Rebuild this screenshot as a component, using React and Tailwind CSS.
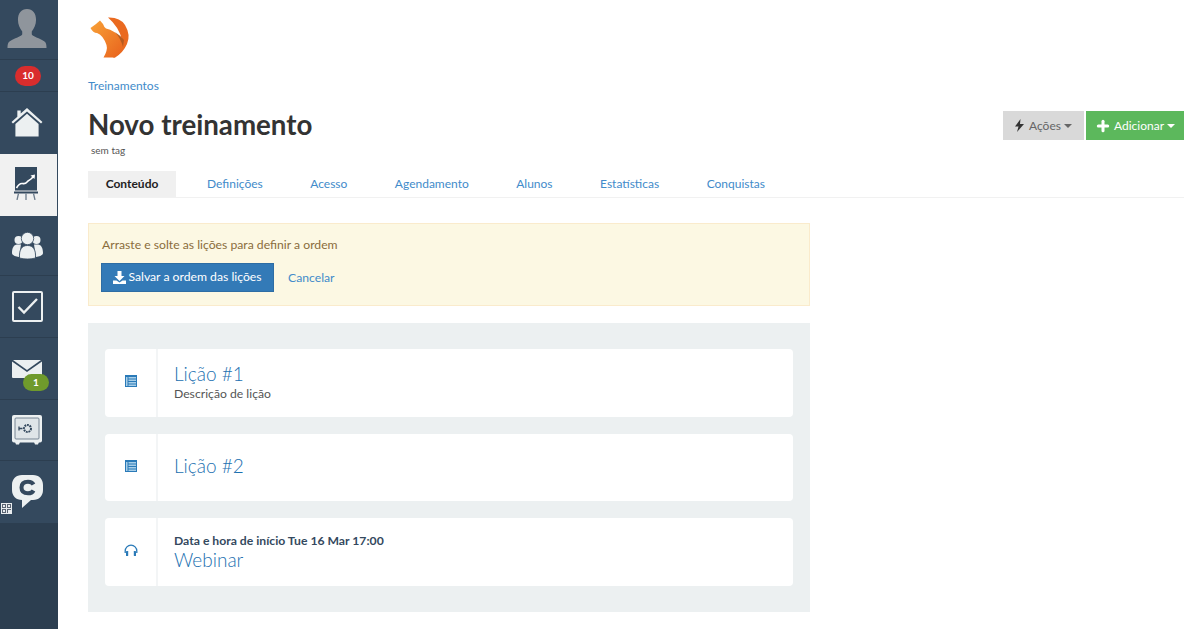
import { Plus } from "lucide-react";

const font = { fontFamily: "Lato, sans-serif" };

const Divider = "border-b border-[#2c3e50]";

const Avatar = () => (
  <svg width="40" height="39" viewBox="0 0 42 40" preserveAspectRatio="none" fill="#8f959c">
    <path d="M21 0c6 0 9.500 4.500 9.500 11 0 5-2 9-4.500 12v3c0 2 9 4.500 13 7 2 1.300 2.500 3.500 2.500 7H.5c0-3.500.5-5.700 2.500-7 4-2.500 13-5 13-7v-3c-2.500-3-4.500-7-4.500-12C11.500 4.500 15 0 21 0z" />
  </svg>
);

const HomeIcon = () => (
  <svg width="32" height="29" viewBox="0 0 32 30" fill="#ecf0f1">
    <path d="M16 0 32 14.500 30.500 16 16 3.500 1.500 16 0 14.500 6 9V2.500h3.500v3.200z" />
    <path d="M16 6 28 16.500V29.500H4V16.500z" />
  </svg>
);

const ChartIcon = () => (
  <svg width="24" height="33" viewBox="0 0 24 33">
    <rect x="1" y="0" width="22" height="23.500" fill="#34495e" />
    <path d="M2.500 21c2-3.500 3.500-5 6-4.500 2 .5 3 .5 4.500-1.500 1-1.500 3-2 4.500-3.500L20 9" fill="none" stroke="#fff" strokeWidth="1.600" />
    <path d="M16.500 8.500 21 7.500 20.500 12z" fill="#fff" />
    <rect x="0" y="24.500" width="24" height="2" fill="#34495e" />
    <path d="M4.500 26.500 3 33M12 26.500V33M19.500 26.500 21 33" stroke="#6d7c8c" strokeWidth="1.300" />
  </svg>
);

const UsersIcon = () => (
  <svg width="31" height="27" viewBox="0 0 31 27" fill="#ecf0f1">
    <circle cx="6.500" cy="8" r="4" />
    <circle cx="24.500" cy="8" r="4" />
    <path d="M0 21c0-5 2-8.500 5-8.500h4L7 25c-4-.5-7-2-7-4zM31 21c0-5-2-8.500-5-8.500h-4L24 25c4-.5 7-2 7-4z" />
    <circle cx="15.500" cy="6.500" r="6.200" stroke="#34495e" strokeWidth=".8" />
    <path d="M7.500 26c-.5-8 2-12.500 8-12.500S24 18 23.500 26c-4 1.300-12 1.300-16 0z" stroke="#34495e" strokeWidth=".8" />
  </svg>
);

const CheckIcon = () => (
  <svg width="31" height="31" viewBox="0 0 31 31" fill="none">
    <rect x="1" y="1" width="29" height="29" stroke="#ecf0f1" strokeWidth="2" rx="1" />
    <path d="M6.500 16 12 21.500 25 8" stroke="#ecf0f1" strokeWidth="2.400" />
  </svg>
);

const MailIcon = () => (
  <svg width="30" height="18" viewBox="0 0 30 18" fill="#ecf0f1">
    <path d="M1 0h28L15 10z" />
    <path d="M0 1.500 15 12 30 1.500V17a1 1 0 0 1-1 1H1a1 1 0 0 1-1-1z" />
  </svg>
);

const SafeIcon = () => (
  <svg width="30" height="30" viewBox="0 0 30 30" fill="none">
    <rect x="0" y="0" width="30" height="27.500" rx="2" fill="#ecf0f1" />
    <rect x="3" y="3" width="24" height="21" rx="1" fill="#dfe5e8" stroke="#5b6d7f" strokeWidth=".8" />
    <circle cx="15.500" cy="13.500" r="3.500" stroke="#34495e" strokeWidth="2" strokeDasharray="1.800 .8" />
    <path d="M7 13.500h3.500M7 11.500v4" stroke="#34495e" strokeWidth="1.300" />
    <path d="M3 27h5l-1 2.500H4zM22 27h5l-1 2.500h-3z" fill="#ecf0f1" />
  </svg>
);

const ChatIcon = () => (
  <svg width="31" height="34" viewBox="0 0 31 34">
    <path d="M10 0h11c6 0 10 4 10 10v5c0 6-4 10-10 10h-2l-9 8 0-8c-6 0-10-4-10-10v-5C0 4 4 0 10 0z" fill="#ecf0f1" />
    <path d="M21.500 9.500c-1-2-3-2.800-5.500-2.800-4 0-6.500 2-6.500 5.800s2.500 5.800 6.500 5.800c2.500 0 4.500-.8 5.500-2.800" fill="none" stroke="#34495e" strokeWidth="4" />
  </svg>
);

const QrIcon = () => (
  <svg width="11" height="11" viewBox="0 0 11 11" className="absolute left-[1px] top-[42px]">
    <rect width="11" height="11" fill="#e9ecef" />
    <path d="M1 1h4v4H1zM6 1h4v4H6zM1 6h4v4H1z" fill="#5a6472" />
    <path d="M2 2h2v2H2zM7 2h2v2H7zM2 7h2v2H2z" fill="#e9ecef" />
    <path d="M6 6h4v1H7v3H6z" fill="#5a6472" />
  </svg>
);

const LessonIcon = () => (
  <svg width="12" height="12" viewBox="0 0 12 12">
    <rect width="12" height="12" fill="#2a7ab8" />
    <path d="M1 2h1.500v9H1zM3.500 2h7.500v1.500H3.500zM3.500 4.500H11V6H3.500zM3.500 7H11v1.500H3.500zM3.500 9.500H11V11H3.500z" fill="#a9cfe8" />
  </svg>
);

const HeadphonesIcon = () => (
  <svg width="14" height="13" viewBox="0 0 14 13" fill="none">
    <path d="M1.200 9V7a5.800 5.800 0 0 1 11.600 0v2" stroke="#2a7ab8" strokeWidth="1.300" />
    <rect x="2" y="7" width="2.200" height="5" rx=".6" fill="#2a7ab8" />
    <rect x="9.800" y="7" width="2.200" height="5" rx=".6" fill="#2a7ab8" />
  </svg>
);

const DownloadIcon = () => (
  <svg width="13" height="13" viewBox="0 0 13 13" fill="#fff">
    <path d="M4.500 0h4v5h3L6.500 10 1.500 5h3z" />
    <path d="M0 9.500h3.500L6.500 11.500 9.500 9.500H13V13H0z" />
  </svg>
);

const Logo = () => (
  <svg width="44" height="45" viewBox="88 15 44 45">
    <defs>
      <linearGradient id="fox" x1="0" y1="0" x2="1" y2="1">
        <stop offset="0" stopColor="#f8a238" />
        <stop offset="1" stopColor="#e8611c" />
      </linearGradient>
    </defs>
    <path d="M108 17.500Q120 17 125 25 131 35 127 44 123 53 115 57.500H113Q120 47 122 40 119 27 108 17.500z" fill="#ea6a20" />
    <path d="M90.500 28 96 24Q98 22 100 20.500L103 24Q104 27 106 28.500 114 30 124 40 124 50 115 57.500H103.500Q108 50 106.500 45 103 35 97 33 93 33 90.500 28z" fill="url(#fox)" />
    <path d="M115 32Q121 36 124 40L123 47Q121 39 115 32z" fill="#a8551f" opacity=".8" />
  </svg>
);

const Chevron = () => (
  <span className="ml-[3px] inline-block border-x-[4px] border-t-[4px] border-x-transparent border-t-current align-middle" />
);

const tabs = ["Definições", "Acesso", "Agendamento", "Alunos", "Estatísticas", "Conquistas"];

const Lesson = ({ icon, children, className = "" }) => (
  <div className="flex h-[67.5px] rounded-[4px] bg-white">
    <div className="flex w-[53px] shrink-0 items-center justify-center border-r-2 border-[#f3f5f6] pb-[3px]">{icon}</div>
    <div className={`flex flex-col justify-center pl-[16px] ${className}`}>{children}</div>
  </div>
);

const App = () => {
  return (
    <div className="flex h-[629px] overflow-hidden bg-white text-[12.2px]" style={font}>
      {/* Sidebar */}
      <div className="flex w-[58px] shrink-0 flex-col bg-[#2c3e50]">
        <div className={`flex h-[60px] items-end justify-center bg-[#34495e] pb-[11px] pr-[4px] ${Divider}`}><Avatar /></div>
        <div className={`flex h-[32px] items-center justify-center bg-[#34495e] pr-[2px] ${Divider}`}>
          <span className="flex h-[20px] w-[26px] items-center justify-center rounded-full bg-[#d92d2d] text-[10px] font-bold text-white">10</span>
        </div>
        <div className="flex h-[62px] items-center justify-center bg-[#34495e] pb-[2px] pr-[4px]"><HomeIcon /></div>
        <div className="flex h-[62px] items-center justify-center border-r border-[#34495e] bg-[#f1f1f1] pb-[3px] pr-[5px]"><ChartIcon /></div>
        <div className={`flex h-[60px] items-center justify-center bg-[#34495e] pr-[3px] ${Divider}`}><UsersIcon /></div>
        <div className={`flex h-[62px] items-center justify-center bg-[#34495e] pr-[3px] ${Divider}`}><CheckIcon /></div>
        <div className={`relative flex h-[62px] items-center justify-center bg-[#34495e] pr-[4px] ${Divider}`}>
          <MailIcon />
          <span className="absolute left-[23px] top-[36px] flex h-[17px] w-[26px] items-center justify-center rounded-full bg-[#6f9a2c] text-[10px] font-bold text-white">1</span>
        </div>
        <div className={`flex h-[61px] items-center justify-center bg-[#34495e] pr-[4px] ${Divider}`}><SafeIcon /></div>
        <div className="relative flex h-[62px] items-center justify-center bg-[#34495e] pr-[3px]">
          <ChatIcon />
          <QrIcon />
        </div>
      </div>

      {/* Main */}
      <div className="min-w-0 flex-1 pl-[30px] pr-[15px]">
        <div className="flex h-[78px] items-start pt-[15px]"><Logo /></div>
        <a className="block text-[12px] leading-[15px] text-[#428bca]">Treinamentos</a>

        <div className="mt-[14px] flex items-start justify-between">
          <div>
            <h1 className="text-[27.7px] font-bold leading-[36px] text-[#333]">Novo treinamento</h1>
            <p className="mt-[1px] pl-[3px] text-[10px] leading-[12px] text-[#555]">sem tag</p>
          </div>
          <div className="mt-[4px] flex gap-[2px] text-[12px]">
            <button className="flex h-[29px] w-[81px] items-center justify-center bg-[#d9d9d9] text-[#666]">
              <svg width="9" height="13" viewBox="0 0 9 13" fill="#333" className="mr-[5px]"><path d="M5.500 0 0 7.500h3.500L2 13 9 5H5z" /></svg>
              Ações
              <Chevron />
            </button>
            <button className="flex h-[29px] w-[98px] items-center justify-center bg-[#5cb85c] text-white">
              <Plus size={16} strokeWidth={4.5} className="mr-[3px]" />
              Adicionar
              <Chevron />
            </button>
          </div>
        </div>

        <div className="mt-[15px] flex h-[27px] items-stretch border-b border-[#f1f1f1] text-[12px]">
          <span className="flex w-[88px] items-center justify-center bg-[#f0f0f0] font-bold text-[#222]">Conteúdo</span>
          <div className="flex items-center gap-[47.5px] pl-[31px] text-[#428bca]">
            {tabs.map((tab) => (
              <a key={tab}>{tab}</a>
            ))}
          </div>
        </div>

        <div className="mt-[25px] h-[83px] w-[722px] border border-[#faebcc] bg-[#fcf8e3] pl-[13px] pt-[13px]">
          <p className="leading-[15px] text-[#8a6d3b]">Arraste e solte as lições para definir a ordem</p>
          <div className="mt-[11px] flex items-center">
            <button className="-ml-[1px] flex h-[29px] w-[173px] items-center justify-center gap-[2px] border border-[#2e6da4] bg-[#337ab7] text-white">
              <DownloadIcon />
              Salvar a ordem das lições
            </button>
            <a className="ml-[14px] pt-[1px] text-[#428bca]">Cancelar</a>
          </div>
        </div>

        <div className="mt-[17px] flex h-[289px] w-[722px] flex-col gap-[17px] bg-[#ecf0f1] px-[17px] pt-[26px]">
          <Lesson icon={<LessonIcon />} className="pb-[2px]">
            <span className="text-[19px] font-light leading-[24px] text-[#1b70b0]">Lição #1</span>
            <span className="leading-[15px] text-[#555]">Descrição de lição</span>
          </Lesson>
          <Lesson icon={<LessonIcon />} className="pb-[2px]">
            <span className="text-[19px] font-light leading-[24px] text-[#1b70b0]">Lição #2</span>
          </Lesson>
          <Lesson icon={<HeadphonesIcon />} className="pt-[2px]">
            <span className="font-bold leading-[14px] text-[#34495e]">Data e hora de início Tue 16 Mar 17:00</span>
            <span className="text-[19px] font-light leading-[24px] text-[#1b70b0]">Webinar</span>
          </Lesson>
        </div>
      </div>
    </div>
  );
};

export default App;
